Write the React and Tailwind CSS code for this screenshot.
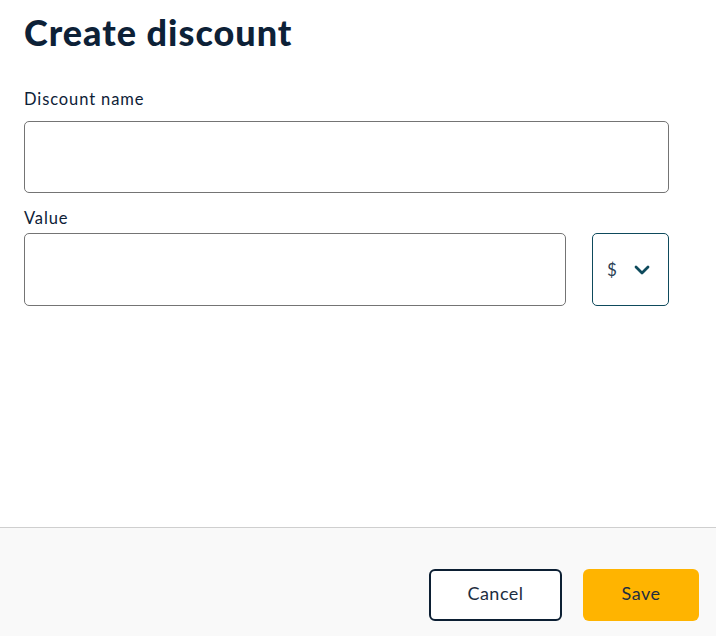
export default function App() {
  return (
    <div className="w-[716px] h-[636px] flex flex-col bg-white text-[#0d2137]" style={{ fontFamily: "Lato, 'Noto Sans', sans-serif" }}>
      <div className="flex-1 px-6 pt-[10px]">
        <h1 className="text-[36px] leading-[44px] font-black tracking-[1px]">Create discount</h1>
        <div className="mt-[34px] text-[16.5px] leading-[22px] tracking-[0.9px]">Discount name</div>
        <div className="mt-[11px] w-[645px] h-[72px] rounded-[5px] border border-[#747474]"></div>
        <div className="mt-[14px] text-[16.5px] leading-[22px] tracking-[0.9px]">Value</div>
        <div className="mt-[4px] flex w-[645px] gap-[26px]">
          <div className="w-[542px] h-[73px] rounded-[5px] border border-[#747474]"></div>
          <div className="w-[77px] h-[73px] rounded-[5px] border border-[#0e4a5c] flex items-center pl-[14px] gap-[17px]">
            <span className="text-[17px] text-[#2b3f55]">$</span>
            <svg width="16" height="10" viewBox="0 0 16 10" fill="none">
              <path d="M2 2 L8 8 L14 2" stroke="#0e4a5c" strokeWidth="2.8" strokeLinecap="round" strokeLinejoin="round" />
            </svg>
          </div>
        </div>
      </div>
      <div className="h-[109px] border-t border-[#cfcfcf] bg-[#f9f9f9] flex items-start justify-end pr-[17px] pt-[41px] gap-[21px]">
        <button className="w-[133px] h-[52px] rounded-[6px] border-2 border-[#0c1f33] bg-white text-[18px] tracking-[0.5px] text-[#1d2d40] pb-[3px]">Cancel</button>
        <button className="w-[116px] h-[52px] rounded-[6px] bg-[#ffb400] text-[18px] tracking-[0.5px] text-[#1d2d40] pb-[3px]">Save</button>
      </div>
    </div>
  );
}
